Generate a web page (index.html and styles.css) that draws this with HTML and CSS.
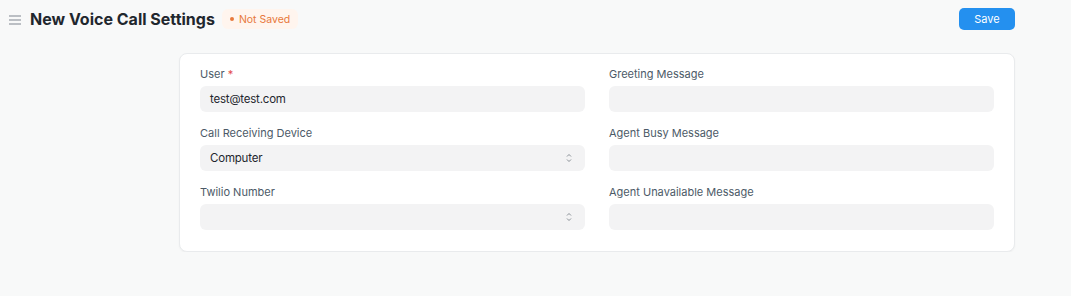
FILE: index.html
```html
<!DOCTYPE html>
<html lang="en">
<head>
  <meta charset="UTF-8" />
  <title>New Voice Call Settings</title>
  <link rel="stylesheet" href="styles.css">
</head>
<body>
  <div class="page">
    <header class="page-head">
      <div class="title-area">
        <svg class="menu-icon" width="12" height="10" viewBox="0 0 12 10">
          <path d="M0 1h12M0 5h12M0 9h12" stroke="#a6acb2" stroke-width="1.3"/>
        </svg>
        <h1>New Voice Call Settings</h1>
        <span class="badge"><span class="dot"></span>Not Saved</span>
      </div>
      <button class="btn-primary">Save</button>
    </header>

    <div class="layout">
      <div class="sidebar"></div>
      <form class="card">
        <div class="column">
          <div class="field">
            <label>User <span class="req">*</span></label>
            <div class="control">test@test.com</div>
          </div>
          <div class="field">
            <label>Call Receiving Device</label>
            <div class="control select">Computer
              <svg class="arrows" width="6" height="10" viewBox="0 0 6 10"><path d="M1 3.5L3 1.5L5 3.5M1 6.5L3 8.5L5 6.5" fill="none" stroke="#7c838a" stroke-width="0.9"/></svg>
            </div>
          </div>
          <div class="field">
            <label>Twilio Number</label>
            <div class="control select">
              <svg class="arrows" width="6" height="10" viewBox="0 0 6 10"><path d="M1 3.5L3 1.5L5 3.5M1 6.5L3 8.5L5 6.5" fill="none" stroke="#7c838a" stroke-width="0.9"/></svg>
            </div>
          </div>
        </div>
        <div class="column">
          <div class="field">
            <label>Greeting Message</label>
            <div class="control"></div>
          </div>
          <div class="field">
            <label>Agent Busy Message</label>
            <div class="control"></div>
          </div>
          <div class="field">
            <label>Agent Unavailable Message</label>
            <div class="control"></div>
          </div>
        </div>
      </form>
    </div>
  </div>
</body>
</html>
```

FILE: styles.css
```css
body {
  margin: 0;
  background: #f8f9f9;
  font-family: Inter, 'Noto Sans', sans-serif;
  color: #1f272e;
}

.page {
  width: 1006px;
  padding-left: 9px;
}

.page-head {
  display: flex;
  align-items: center;
  justify-content: space-between;
  height: 38px;
}

.title-area {
  display: flex;
  align-items: center;
}

.menu-icon {
  margin-right: 9px;
  margin-top: 1px;
}

h1 {
  margin: 0;
  font-size: 16px;
  font-weight: 700;
  color: #1f272e;
}

.badge {
  display: flex;
  align-items: center;
  margin-left: 7px;
  padding: 0 8px;
  height: 20px;
  border-radius: 6px;
  background: #fff5ee;
  color: #e8793b;
  font-size: 10.5px;
}

.badge .dot {
  width: 4px;
  height: 4px;
  border-radius: 50%;
  background: #e8793b;
  margin-right: 5px;
}

.btn-primary {
  width: 56px;
  height: 22px;
  border: none;
  border-radius: 5px;
  background: #2490ef;
  color: #fff;
  font-family: inherit;
  font-size: 11px;
}

.layout {
  display: flex;
  margin-top: 15px;
}

.sidebar {
  width: 170px;
  flex-shrink: 0;
}

.card {
  flex: 1;
  display: grid;
  grid-template-columns: 1fr 1fr;
  column-gap: 24px;
  padding: 12px 20px 8px;
  background: #fff;
  border: 1px solid #e9ebed;
  border-radius: 8px;
  box-shadow: 0 1px 2px rgba(0,0,0,0.04);
}

.field {
  margin-bottom: 13px;
}

label {
  display: block;
  height: 16px;
  line-height: 16px;
  margin-bottom: 4px;
  font-size: 11px;
  color: #4c5a67;
}

.req {
  color: #e24c4c;
}

.control {
  position: relative;
  height: 26px;
  line-height: 26px;
  padding: 0 10px;
  border-radius: 6px;
  background: #f3f3f4;
  font-size: 11.5px;
  letter-spacing: -0.2px;
  color: #1f272e;
}

.arrows {
  position: absolute;
  right: 13px;
  top: 8px;
}
```
